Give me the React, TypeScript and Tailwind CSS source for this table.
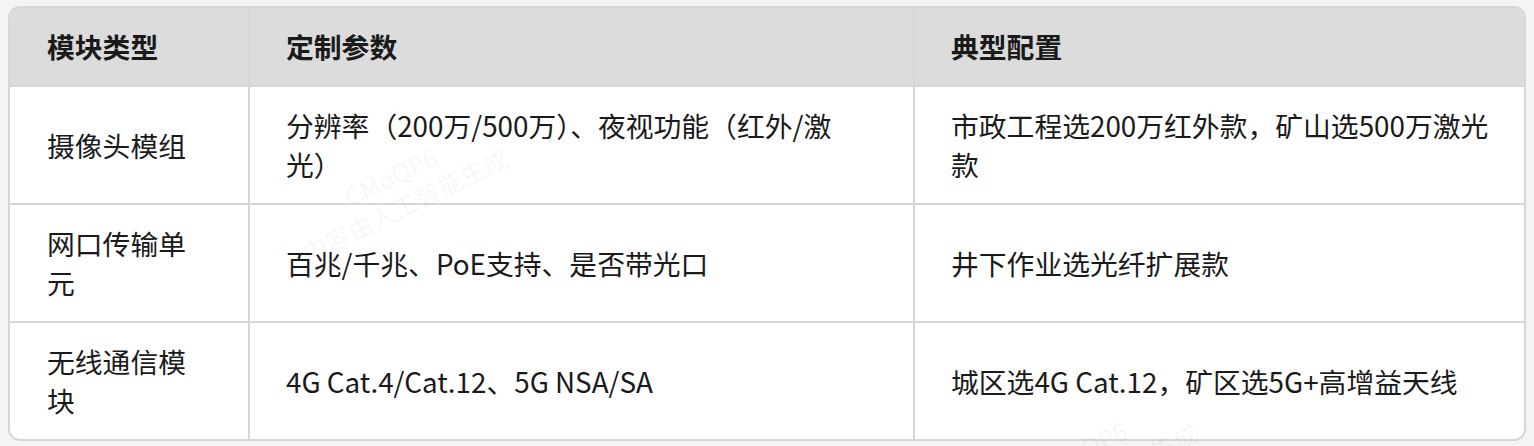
const rows = [
  {
    type: "摄像头模组",
    params: "分辨率（200万/500万）、夜视功能（红外/激\n光）",
    config: "市政工程选200万红外款，矿山选500万激光\n款",
  },
  {
    type: "网口传输单元",
    params: "百兆/千兆、PoE支持、是否带光口",
    config: "井下作业选光纤扩展款",
  },
  {
    type: "无线通信模块",
    params: "4G Cat.4/Cat.12、5G NSA/SA",
    config: "城区选4G Cat.12，矿区选5G+高增益天线",
  },
];

function Watermark({ className }: { className: string }) {
  return (
    <div
      className={`pointer-events-none absolute flex -rotate-[26deg] flex-col items-center text-[25px] leading-[32px] text-black/[0.05] ${className}`}
    >
      <span>CMoQP6</span>
      <span>内容由人工智能生成</span>
    </div>
  );
}

export default function App() {
  return (
    <div
      className="relative h-[446px] w-[1534px] overflow-hidden bg-[#f4f4f4] pl-2 pt-[6px]"
      style={{ fontFamily: '"Microsoft YaHei", "Noto Sans CJK SC", "Noto Sans", sans-serif' }}
    >
      <div className="w-[1518px] overflow-hidden rounded-[12px] border-2 border-[#d6d6d6] bg-white">
        <table className="w-full table-fixed border-collapse text-[27.8px] leading-[39px] text-[#1a1a1a]">
          <colgroup>
            <col className="w-[239px]" />
            <col className="w-[665px]" />
            <col />
          </colgroup>
          <thead>
            <tr className="bg-[#dcdcdc]">
              <th className="border-b-2 border-[#d6d6d6] px-[37px] py-[19px] text-left font-bold">模块类型</th>
              <th className="border-b-2 border-l-2 border-[#d6d6d6] px-[36px] py-[19px] text-left font-bold">定制参数</th>
              <th className="border-b-2 border-l-2 border-[#d6d6d6] pl-[36px] pr-[24px] py-[19px] text-left font-bold">典型配置</th>
            </tr>
          </thead>
          <tbody>
            {rows.map((r, i) => (
              <tr key={i}>
                <td className={`px-[37px] py-[19px] ${i < rows.length - 1 ? "border-b-2 border-[#d6d6d6]" : ""}`}>{r.type}</td>
                <td className={`whitespace-pre-line border-l-2 border-[#d6d6d6] px-[36px] py-[19px] ${i < rows.length - 1 ? "border-b-2" : ""}`}>{r.params}</td>
                <td className={`whitespace-pre-line border-l-2 border-[#d6d6d6] pl-[36px] pr-[24px] py-[19px] ${i < rows.length - 1 ? "border-b-2" : ""}`}>{r.config}</td>
              </tr>
            ))}
          </tbody>
        </table>
      </div>
      <Watermark className="left-[285px] top-[158px]" />
      <Watermark className="left-[975px] top-[432px]" />
    </div>
  );
}
